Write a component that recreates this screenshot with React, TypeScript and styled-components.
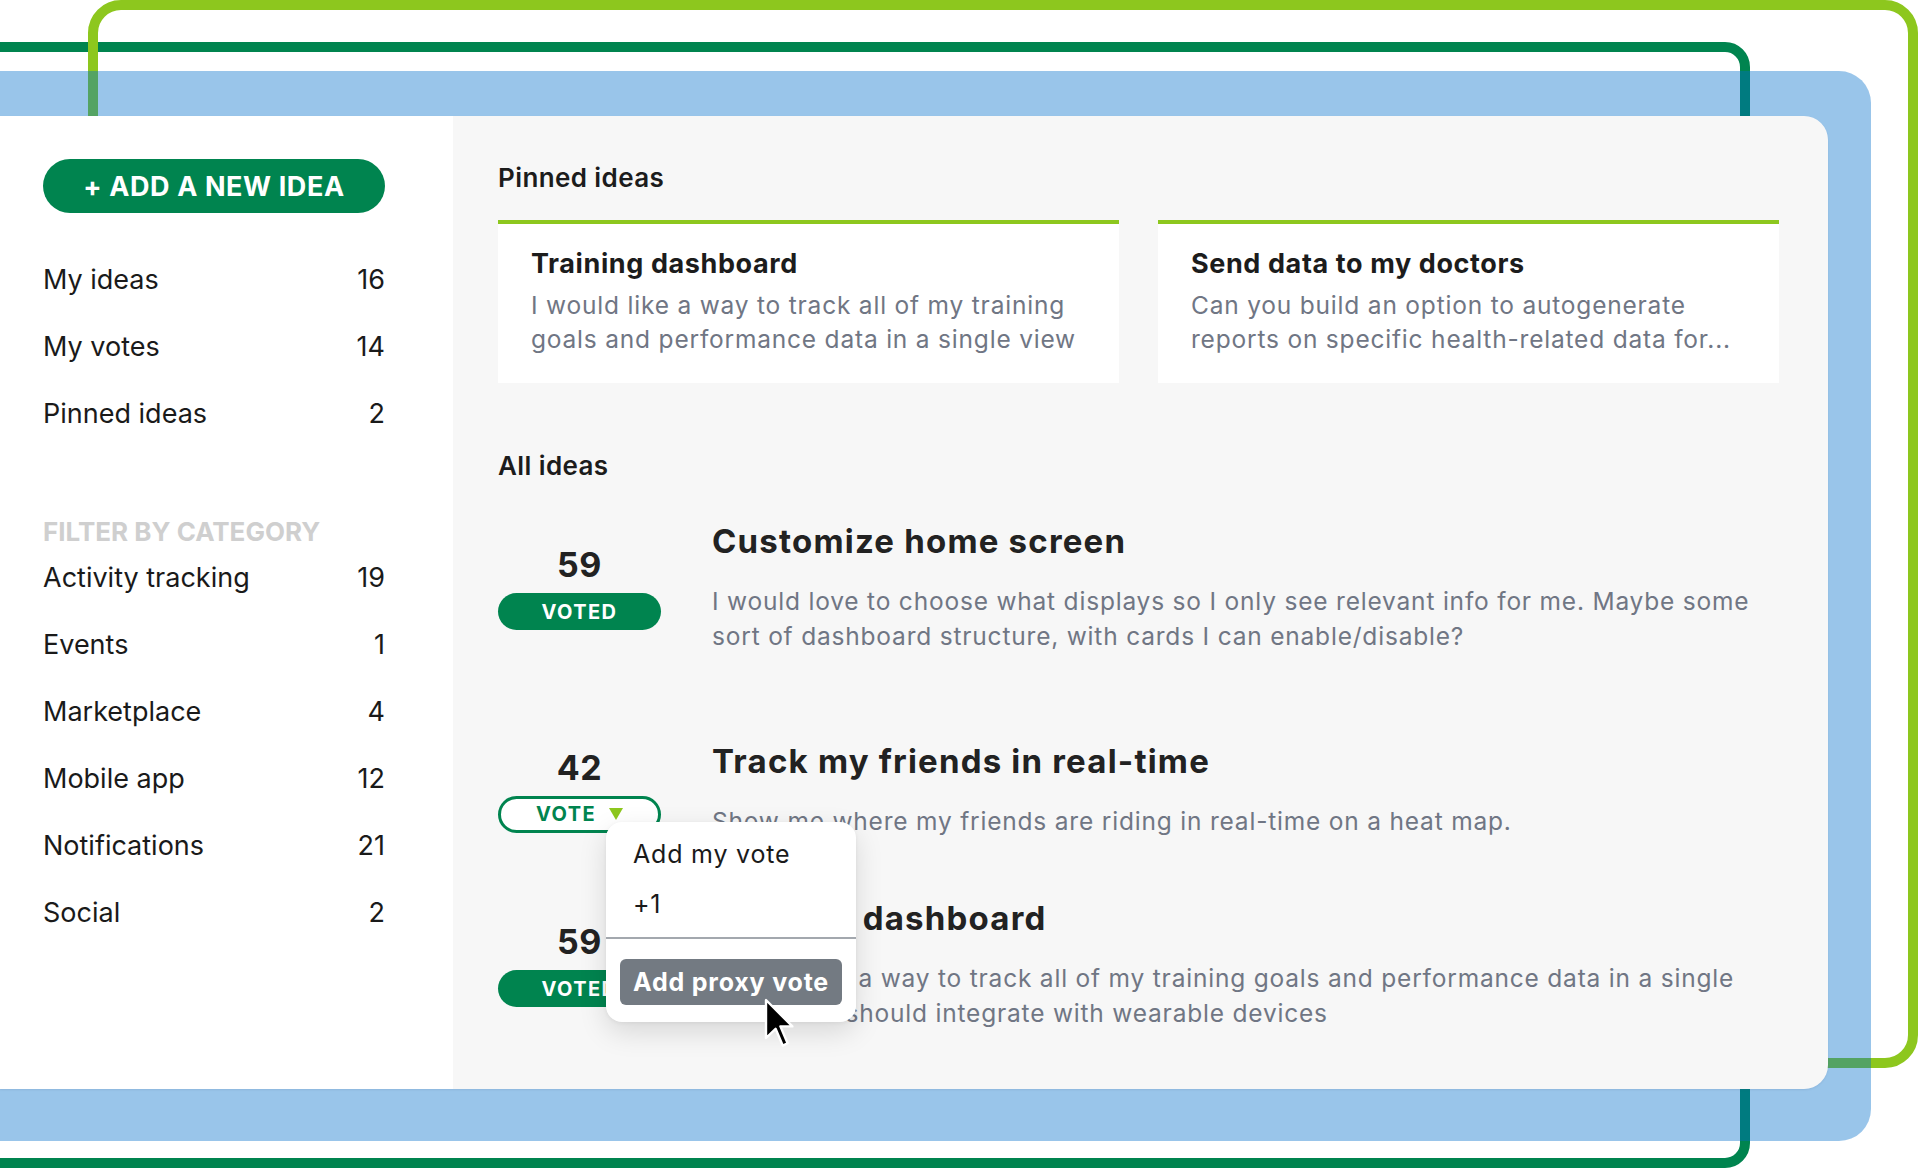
import styled, { createGlobalStyle, css } from 'styled-components';

const GlobalStyle = createGlobalStyle`
	* {
		box-sizing: border-box;
	}

	html,
	body {
		margin: 0;
		padding: 0;
		background: #ffffff;
	}

	body {
		font-family: Inter, 'Noto Sans', 'Liberation Sans', sans-serif;
		color: #1c1c1c;
		overflow: hidden;
	}
`;

const GREEN = '#00844f';
const LIME = '#8dc71e';
const MUTED = '#707684';

type NavItem = {
	label: string;
	count: number;
};

type Idea = {
	votes: number;
	voted: boolean;
	title: string;
	text: string;
	spaceAfter: number;
};

const navItems: NavItem[] = [
	{ label: 'My ideas', count: 16 },
	{ label: 'My votes', count: 14 },
	{ label: 'Pinned ideas', count: 2 }
];

const categories: NavItem[] = [
	{ label: 'Activity tracking', count: 19 },
	{ label: 'Events', count: 1 },
	{ label: 'Marketplace', count: 4 },
	{ label: 'Mobile app', count: 12 },
	{ label: 'Notifications', count: 21 },
	{ label: 'Social', count: 2 }
];

const pinned = [
	{
		title: 'Training dashboard',
		text: 'I would like a way to track all of my training goals and performance data in a single view'
	},
	{
		title: 'Send data to my doctors',
		text: 'Can you build an option to autogenerate reports on specific health-related data for...'
	}
];

const ideas: Idea[] = [
	{
		votes: 59,
		voted: true,
		title: 'Customize home screen',
		text: 'I would love to choose what displays so I only see relevant info for me. Maybe some sort of dashboard structure, with cards I can enable/disable?',
		spaceAfter: 87
	},
	{
		votes: 42,
		voted: false,
		title: 'Track my friends in real-time',
		text: 'Show me where my friends are riding in real-time on a heat map.',
		spaceAfter: 59
	},
	{
		votes: 59,
		voted: true,
		title: 'Training dashboard',
		text: 'I would like a way to track all of my training goals and performance data in a single view. That should integrate with wearable devices',
		spaceAfter: 0
	}
];

const Stage = styled.div`
	position: relative;
	width: 1920px;
	height: 1171px;
	padding-top: 116px;
	overflow: hidden;
`;

const Backdrop = styled.svg`
	position: absolute;
	top: 0;
	left: 0;
	z-index: 0;
`;

const Card = styled.div`
	position: relative;
	z-index: 1;
	width: 1828px;
	height: 973px;
	display: grid;
	grid-template-columns: 453px 1fr;
	border-radius: 0 24px 24px 0;
	overflow: hidden;
	box-shadow: 0 1px 2px rgba(60, 70, 120, 0.12);
`;

const Sidebar = styled.aside`
	background: #ffffff;
	padding: 43px 68px 0 43px;
	display: flex;
	flex-direction: column;
`;

const AddButton = styled.button`
	height: 54px;
	width: 100%;
	border: none;
	border-radius: 27px;
	background: ${GREEN};
	color: #ffffff;
	font-family: inherit;
	font-size: 27px;
	font-weight: 700;
	letter-spacing: 0.6px;
	text-transform: uppercase;
	cursor: pointer;
`;

const NavList = styled.ul<{ $top: number }>`
	list-style: none;
	margin: ${(props) => props.$top}px 0 0;
	padding: 0;
`;

const NavRow = styled.li`
	height: 67px;
	display: flex;
	align-items: center;
	justify-content: space-between;
	font-size: 27px;
	font-weight: 400;
	color: #1a1a1a;
`;

const FilterHeading = styled.h3`
	margin: 72px 0 0;
	font-size: 26px;
	line-height: 25px;
	font-weight: 700;
	color: #cfcfcf;
	text-transform: uppercase;
`;

const Main = styled.main`
	background: #f7f7f7;
	padding: 47px 49px 0 45px;
	display: flex;
	flex-direction: column;
`;

const SectionTitle = styled.h2<{ $top?: number }>`
	margin: ${(props) => props.$top || 0}px 0 0;
	font-size: 26px;
	line-height: 30px;
	font-weight: 600;
	letter-spacing: 0.4px;
	color: #1c1c1c;
`;

const PinnedGrid = styled.div`
	margin-top: 27px;
	display: grid;
	grid-template-columns: 1fr 1fr;
	gap: 39px;
`;

const PinnedCard = styled.article`
	height: 163px;
	background: #ffffff;
	border-top: 4px solid ${LIME};
	padding: 24px 33px 0;
`;

const PinnedTitle = styled.h4`
	margin: 0;
	font-size: 27px;
	line-height: 32px;
	font-weight: 700;
	letter-spacing: 0.6px;
	color: #1c1c1c;
`;

const PinnedText = styled.p`
	margin: 8px 0 0;
	font-size: 24.5px;
	line-height: 34px;
	letter-spacing: 0.8px;
	color: ${MUTED};
`;

const IdeaList = styled.div`
	margin-top: 40px;
	display: flex;
	flex-direction: column;
`;

const IdeaRow = styled.div<{ $space: number }>`
	display: flex;
	align-items: center;
	gap: 51px;
	margin-bottom: ${(props) => props.$space}px;
`;

const VoteColumn = styled.div`
	position: relative;
	width: 163px;
	flex-shrink: 0;
	display: flex;
	flex-direction: column;
	align-items: center;
	gap: 8px;
`;

const VoteCount = styled.div`
	font-size: 34px;
	line-height: 40px;
	font-weight: 700;
	letter-spacing: 0.5px;
	color: #222222;
`;

const VotePill = styled.button<{ $voted: boolean }>`
	width: 163px;
	height: 37px;
	border-radius: 999px;
	font-family: inherit;
	font-size: 20px;
	font-weight: 700;
	letter-spacing: 1.4px;
	display: flex;
	align-items: center;
	justify-content: center;
	gap: 13px;
	cursor: pointer;

	${(props) =>
		props.$voted
			? css`
					background: ${GREEN};
					color: #ffffff;
					border: none;
			  `
			: css`
					background: #ffffff;
					color: ${GREEN};
					border: 3px solid ${GREEN};
			  `}
`;

const IdeaBody = styled.div`
	flex: 1;
	min-width: 0;
`;

const IdeaTitle = styled.h3`
	margin: 0;
	font-size: 33px;
	line-height: 40px;
	font-weight: 700;
	letter-spacing: 1.2px;
	color: #222222;
`;

const IdeaText = styled.p`
	margin: 23px 0 0;
	font-size: 24.5px;
	line-height: 35px;
	letter-spacing: 0.8px;
	color: ${MUTED};
`;

const Popover = styled.div`
	position: absolute;
	top: 74px;
	left: 108px;
	z-index: 5;
	width: 250px;
	padding: 7px 14px 17px;
	background: #ffffff;
	border-radius: 16px;
	box-shadow: 0 10px 28px rgba(0, 0, 0, 0.13), 0 1px 4px rgba(0, 0, 0, 0.06);
`;

const MenuItem = styled.div`
	height: 50px;
	padding-left: 13px;
	display: flex;
	align-items: center;
	font-size: 25px;
	letter-spacing: 0.8px;
	color: #1a1a1a;
`;

const MenuDivider = styled.hr`
	margin: 8px -14px 20px;
	height: 2px;
	border: none;
	background: #a3a8ae;
`;

const ProxyButton = styled.button`
	width: 100%;
	height: 46px;
	border: none;
	border-radius: 6px;
	background: #737a82;
	color: #ffffff;
	font-family: inherit;
	font-size: 25px;
	font-weight: 700;
	letter-spacing: 0.8px;
	text-align: left;
	white-space: nowrap;
	padding: 0 0 0 13px;
`;

const Cursor = styled.svg`
	position: absolute;
	left: 158px;
	top: 176px;
	pointer-events: none;
`;

const Caret = () => (
	<svg width="14" height="12" viewBox="0 0 14 12">
		<polygon points="0,0 14,0 7,12" fill={LIME} />
	</svg>
);

const App = () => {
	return (
		<>
			<GlobalStyle />
			<Stage>
				<Backdrop width="1920" height="1171" viewBox="0 0 1920 1171">
					<rect
						x="-60"
						y="47"
						width="1805"
						height="1116"
						rx="20"
						fill="none"
						stroke={GREEN}
						strokeWidth="10"
					/>
					<rect
						x="93"
						y="5"
						width="1820"
						height="1058"
						rx="28"
						fill="none"
						stroke={LIME}
						strokeWidth="10"
					/>
					<rect
						x="-60"
						y="71"
						width="1931"
						height="1070"
						rx="32"
						fill="rgb(0, 111, 202)"
						fillOpacity="0.4"
					/>
				</Backdrop>
				<Card>
					<Sidebar>
						<AddButton>+ Add a new idea</AddButton>
						<NavList $top={33}>
							{navItems.map((item) => (
								<NavRow key={item.label}>
									<span>{item.label}</span>
									<span>{item.count}</span>
								</NavRow>
							))}
						</NavList>
						<FilterHeading>Filter by category</FilterHeading>
						<NavList $top={0}>
							{categories.map((item) => (
								<NavRow key={item.label}>
									<span>{item.label}</span>
									<span>{item.count}</span>
								</NavRow>
							))}
						</NavList>
					</Sidebar>
					<Main>
						<SectionTitle>Pinned ideas</SectionTitle>
						<PinnedGrid>
							{pinned.map((card) => (
								<PinnedCard key={card.title}>
									<PinnedTitle>{card.title}</PinnedTitle>
									<PinnedText>{card.text}</PinnedText>
								</PinnedCard>
							))}
						</PinnedGrid>
						<SectionTitle $top={68}>All ideas</SectionTitle>
						<IdeaList>
							{ideas.map((idea, i) => (
								<IdeaRow key={i} $space={idea.spaceAfter}>
									<VoteColumn>
										<VoteCount>{idea.votes}</VoteCount>
										<VotePill $voted={idea.voted}>
											{idea.voted ? 'VOTED' : 'VOTE'}
											{!idea.voted && <Caret />}
										</VotePill>
										{!idea.voted && (
											<Popover>
												<MenuItem>Add my vote</MenuItem>
												<MenuItem>+1</MenuItem>
												<MenuDivider />
												<ProxyButton>Add proxy vote</ProxyButton>
												<Cursor width="32" height="52" viewBox="-2 -2 32 52">
													<path
														d="M0 0 L0 38 L9.6 28.8 L16.8 45.6 L21.6 43.2 L14.4 26.4 L26.4 26.4 Z"
														fill="#000000"
														stroke="#ffffff"
														strokeWidth="2.4"
														strokeLinejoin="round"
													/>
												</Cursor>
											</Popover>
										)}
									</VoteColumn>
									<IdeaBody>
										<IdeaTitle>{idea.title}</IdeaTitle>
										<IdeaText>{idea.text}</IdeaText>
									</IdeaBody>
								</IdeaRow>
							))}
						</IdeaList>
					</Main>
				</Card>
			</Stage>
		</>
	);
};

export default App;
